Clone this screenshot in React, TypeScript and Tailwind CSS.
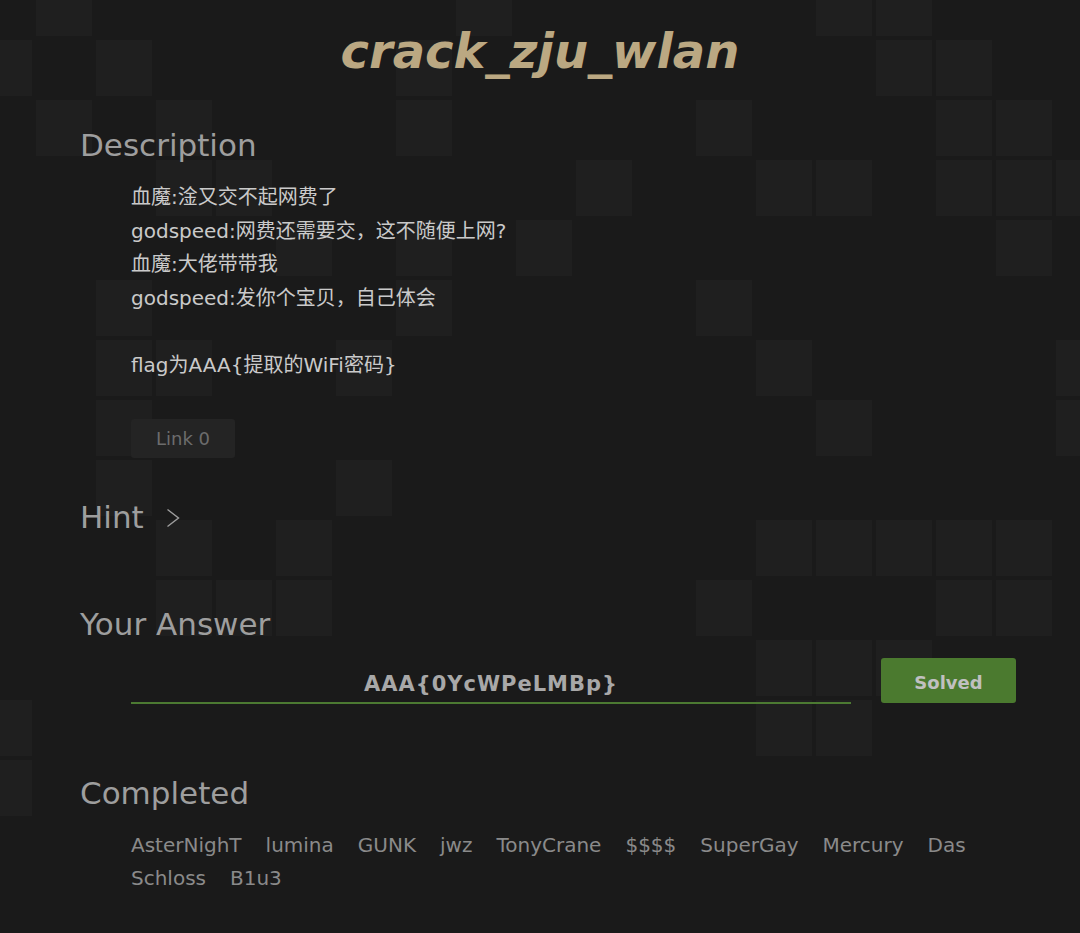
// background tiles: row -> filled columns (60px pitch, 56px squares)
const TILES: Record<number, number[]> = {
  0: [1, 8, 14, 15],
  1: [0, 2, 7, 15, 16],
  2: [1, 3, 7, 12, 16, 17],
  3: [3, 4, 10, 13, 14, 16, 17, 18],
  4: [5, 7, 9, 17],
  5: [2, 7, 12],
  6: [2, 3, 6, 13, 18],
  7: [2, 14, 18],
  8: [2, 6],
  9: [3, 5, 13, 14, 15, 16, 17],
  10: [3, 4, 5, 12, 16, 17],
  11: [13, 14, 15],
  12: [0, 13, 14],
  13: [0],
};

const ROWS = 16;
const COLS = 19;

const DESCRIPTION = [
  '血魔:淦又交不起网费了',
  'godspeed:网费还需要交，这不随便上网?',
  '血魔:大佬带带我',
  'godspeed:发你个宝贝，自己体会',
  '',
  'flag为AAA{提取的WiFi密码}',
];

const SOLVERS = ['AsterNighT', 'lumina', 'GUNK', 'jwz', 'TonyCrane', '$$$$', 'SuperGay', 'Mercury', 'Das', 'Schloss', 'B1u3'];

function TileBackground() {
  const cells = [];
  for (let r = 0; r < ROWS; r++) {
    for (let c = 0; c < COLS; c++) {
      const on = TILES[r]?.includes(c);
      cells.push(<div key={`${r}-${c}`} className={on ? 'bg-[#1f1f1f]' : ''} />);
    }
  }
  return (
    <div className="absolute inset-0 overflow-hidden" aria-hidden>
      <div className="-ml-[24px] -mt-[20px] grid grid-cols-[repeat(19,56px)] auto-rows-[56px] gap-[4px]">{cells}</div>
    </div>
  );
}

export default function App() {
  return (
    <div className="relative min-h-[933px] overflow-hidden bg-[#1a1a1a] font-['DejaVu_Sans','Noto_Sans_CJK_SC',sans-serif]">
      <TileBackground />

      <div className="relative px-[80px] pb-10">
        <h1 className="pt-[23px] text-center text-[48px] leading-[56px] font-bold italic text-[#bba882]">crack_zju_wlan</h1>

        <section className="mt-[46px]">
          <h2 className="text-[31px] leading-[40px] text-[#9e9e9e]">Description</h2>
          <div className="mt-[16px] pl-[51px] text-[20px] leading-[33.5px] text-[#cacaca]">
            {DESCRIPTION.map((line, i) =>
              line ? <p key={i}>{line}</p> : <p key={i} className="h-[33.5px]" />
            )}
            <button className="mt-[37px] h-[39px] rounded-[3px] bg-[#242424] px-[25px] text-[18px] text-[#6c6c6c]">
              Link 0
            </button>
          </div>
        </section>

        <section className="mt-[39px] flex items-center">
          <h2 className="text-[31px] leading-[40px] text-[#9e9e9e]">Hint</h2>
          <svg className="ml-[22px] mt-[2px]" width="14" height="20" viewBox="0 0 14 20" fill="none">
            <polyline points="1.5,1.5 12.5,10 1.5,18.5" stroke="#9e9e9e" strokeWidth="1.4" />
          </svg>
        </section>

        <section className="mt-[67px]">
          <h2 className="text-[31px] leading-[40px] text-[#9e9e9e]">Your Answer</h2>
          <div className="mt-[14px] flex items-end gap-[30px] pl-[51px]">
            <input
              readOnly
              value="AAA{0YcWPeLMBp}"
              className="h-[45px] w-[720px] shrink-0 border-b-2 border-[#4c7a32] bg-transparent pt-[7px] text-center text-[21px] font-bold tracking-[1px] text-[#a8a8a8] outline-none"
            />
            <button className="mb-[1px] h-[45px] w-[135px] shrink-0 rounded-[3px] bg-[#4b7a2f] pt-[4px] text-[18px] font-bold text-[#c0c0c0]">
              Solved
            </button>
          </div>
        </section>

        <section className="mt-[69px]">
          <h2 className="text-[31px] leading-[40px] text-[#9e9e9e]">Completed</h2>
          <p className="mt-[16px] pl-[51px] text-[20px] leading-[33px] text-[#8a8a8a]">
            {SOLVERS.map((name) => (
              <span key={name} className="mr-6 inline-block">
                {name}
              </span>
            ))}
          </p>
        </section>
      </div>
    </div>
  );
}
